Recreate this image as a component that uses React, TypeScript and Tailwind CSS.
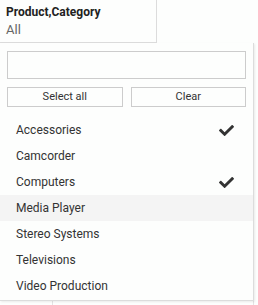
import { FaCheck } from "react-icons/fa";

const items = [
  { label: "Accessories", checked: true },
  { label: "Camcorder", checked: false },
  { label: "Computers", checked: true },
  { label: "Media Player", checked: false, hover: true },
  { label: "Stereo Systems", checked: false },
  { label: "Televisions", checked: false },
  { label: "Video Production", checked: false },
];

export default function App() {
  return (
    <div className="relative w-[258px] h-[305px] overflow-hidden bg-[#fdfefd] font-['Roboto',sans-serif] text-[#333]">
      {/* Slicer header */}
      <div className="w-[157px] h-[43px] border-r border-b border-[#dcdcdc] pl-[6px] pt-[4px]">
        <div className="text-[12px] font-bold leading-[16px] text-[#222]">Product,Category</div>
        <div className="text-[13px] leading-[18px] text-[#666] mt-[1px]">All</div>
      </div>
      <div className="flex h-[262px]">
        <div className="w-[53px] border-r border-[#e4e4e4]" />
        <div className="w-[201px] border-r border-[#e4e4e4]" />
      </div>

      {/* Dropdown panel */}
      <div className="absolute left-0 top-[43px] w-[254px] h-[258px] bg-[#fdfefd] border-r border-b border-[#dcdcdc] shadow-[1px_1px_2px_rgba(0,0,0,0.08)]">
        <div className="px-[7px] pt-[8px]">
          <input className="block w-[239px] h-[28px] border border-[#cccccc] bg-[#fdfefd] outline-none" />
          <div className="grid grid-cols-2 gap-[8px] mt-[8px]">
            <button className="h-[20px] border border-[#cccccc] bg-[#fdfefd] text-[11px] text-[#333]">Select all</button>
            <button className="h-[20px] border border-[#cccccc] bg-[#fdfefd] text-[11px] text-[#333]">Clear</button>
          </div>
        </div>
        <ul className="mt-[10px]">
          {items.map((it) => (
            <li
              key={it.label}
              className={`flex items-center justify-between h-[26px] pl-[16px] pr-[19px] text-[12px] ${it.hover ? "bg-[#f4f4f4]" : ""}`}
            >
              <span>{it.label}</span>
              {it.checked && <FaCheck className="w-[15px] h-[15px] text-[#333]" />}
            </li>
          ))}
        </ul>
      </div>
    </div>
  );
}
